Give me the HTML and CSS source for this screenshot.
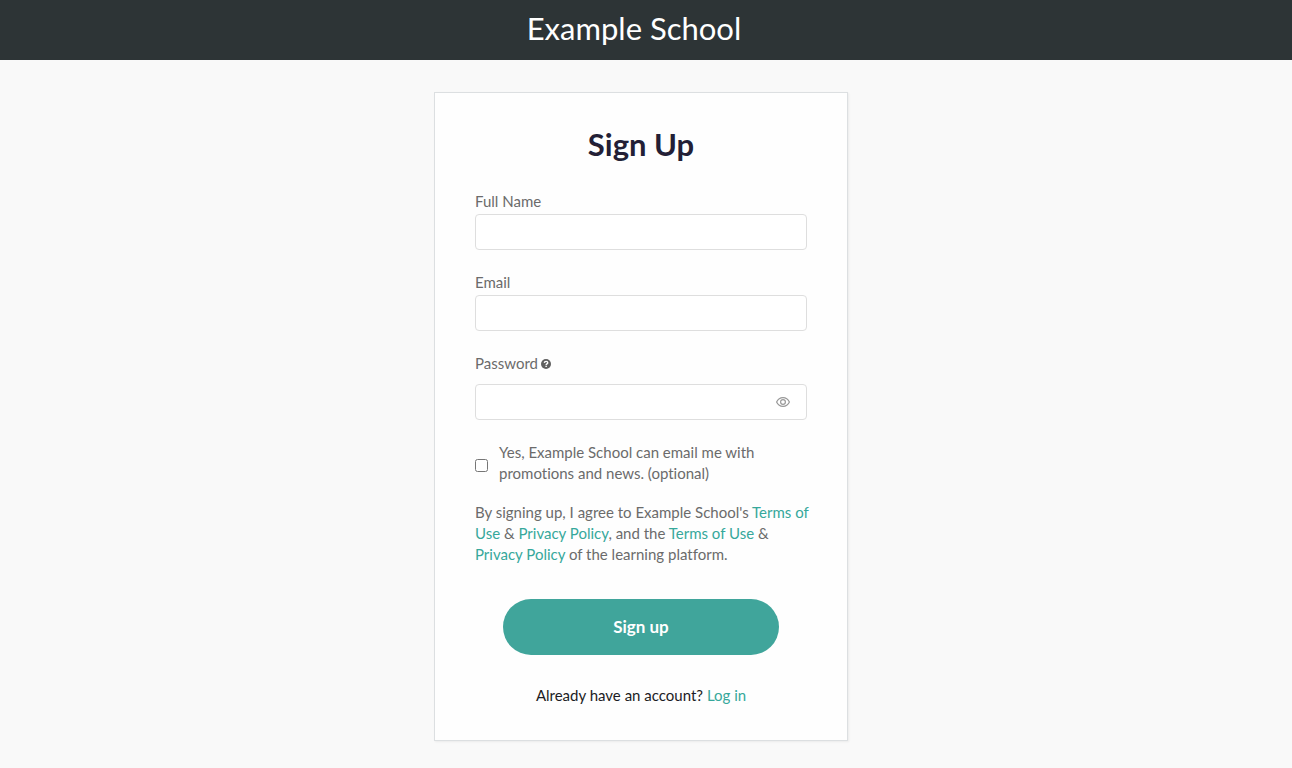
FILE: index.html
```html
<!DOCTYPE html>
<html lang="en">
<head>
  <meta charset="UTF-8" />
  <meta name="viewport" content="width=device-width, initial-scale=1.0"/>
  <title>Sign Up - Example School</title>
  <link rel="stylesheet" href="styles.css">
</head>
<body>
  <header class="site-header">
    <a href="#" class="site-name">Example School</a>
  </header>

  <main class="page">
    <form class="card" action="#" method="post">
      <h1>Sign Up</h1>

      <div class="field">
        <label for="name">Full Name</label>
        <input type="text" id="name" name="name" autocomplete="name" />
      </div>

      <div class="field">
        <label for="email">Email</label>
        <input type="email" id="email" name="email" autocomplete="email" />
      </div>

      <div class="field field-password">
        <div class="label-row">
          <label for="password">Password</label>
          <svg class="help-icon" viewBox="0 0 12 12" role="img" aria-label="Password help">
            <circle cx="6" cy="6" r="6" fill="#5f5f5f"/>
            <path d="M4 4.6C4.1 3.3 5 2.8 6.1 2.8c1.200 0 2 .7 2 1.700 0 1.400-1.900 1.400-1.900 2.700" fill="none" stroke="#fff" stroke-width="1.700"/>
            <rect x="5.300" y="8" width="1.700" height="1.600" fill="#fff"/>
          </svg>
        </div>
        <div class="password-box">
          <input type="password" id="password" name="password" autocomplete="new-password" />
          <button type="button" class="show-password" id="togglePassword" aria-label="Show password">
            <svg viewBox="0 0 14 10" fill="none" stroke="#999" stroke-width="1.200">
              <path d="M.6 5C2 2 4.200.6 7 .6S12 2 13.400 5C12 8 9.800 9.400 7 9.400S2 8 .6 5z"/>
              <circle cx="7" cy="5" r="2.400"/>
            </svg>
          </button>
        </div>
      </div>

      <div class="consent">
        <input type="checkbox" id="promotions" name="promotions" />
        <label for="promotions">Yes, Example School can email me with promotions and news. (optional)</label>
      </div>

      <p class="terms">By signing up, I agree to Example School's <a href="#">Terms of Use</a> &amp; <a href="#">Privacy Policy</a>, and the <a href="#">Terms of Use</a> &amp; <a href="#">Privacy Policy</a> of the learning platform.</p>

      <button type="submit" class="submit">Sign up</button>

      <p class="login">Already have an account? <a href="#">Log in</a></p>
    </form>
  </main>

  <script>
    document.getElementById("togglePassword").addEventListener("click", () => {
      const input = document.getElementById("password");
      input.type = input.type === "password" ? "text" : "password";
    });
  </script>
</body>
</html>
```
FILE: styles.css
```css
* {
  box-sizing: border-box;
}

body {
  margin: 0;
  background: #f9f9f9;
  color: #6b6b6b;
  font-family: Lato, "Open Sans", sans-serif;
  font-size: 15px;
  font-variant-ligatures: none;
  line-height: 21px;
}

a {
  color: #36a89b;
  text-decoration: none;
}

.site-header {
  background: #2d3436;
  padding: 8px 24px 12px 0;
  text-align: center;
}

.site-name {
  display: block;
  color: #fff;
  font-size: 31px;
  line-height: 40px;
}

.page {
  padding: 32px 10px 27px 0;
}

.card {
  max-width: 414px;
  margin: 0 auto;
  padding: 31px 40px 34px;
  background: #fefefe;
  border: 1px solid #dcdfe1;
  box-shadow: 1px 1px 2px rgba(0, 0, 0, 0.06);
}

h1 {
  margin: 0 0 27px;
  color: #231f36;
  font-size: 31px;
  font-weight: 700;
  line-height: 40px;
  text-align: center;
}

.field {
  display: flex;
  flex-direction: column;
  gap: 2px;
  margin-bottom: 22px;
}

.field-password {
  gap: 10px;
}

.label-row {
  display: flex;
  align-items: center;
  gap: 3px;
}

.help-icon {
  width: 10px;
  height: 10px;
}

.field input {
  width: 100%;
  height: 36px;
  padding: 0 12px;
  background: #fff;
  border: 1px solid #dedede;
  border-radius: 4px;
  font: inherit;
}

.password-box {
  position: relative;
}

.password-box input {
  display: block;
  padding-right: 40px;
}

.show-password {
  position: absolute;
  top: 0;
  right: 8px;
  width: 32px;
  height: 36px;
  padding: 0;
  display: flex;
  align-items: center;
  justify-content: center;
  background: none;
  border: none;
  cursor: pointer;
}

.show-password svg {
  width: 14px;
  height: 10px;
}

.consent {
  display: flex;
  align-items: center;
  gap: 11px;
  margin-bottom: 18px;
}

.consent input {
  flex-shrink: 0;
  width: 13px;
  height: 13px;
  margin: 4px 0 0;
}

.terms {
  margin: 0 -6px 34px 0;
}

.submit {
  display: block;
  width: 100%;
  max-width: 276px;
  height: 56px;
  margin: 0 auto 30px;
  padding: 0 0 2px;
  background: #40a59b;
  color: #fff;
  border: none;
  border-radius: 28px;
  font-family: inherit;
  font-size: 17px;
  font-weight: 700;
  cursor: pointer;
}

.login {
  margin: 0;
  color: #1c1c24;
  text-align: center;
}
```
